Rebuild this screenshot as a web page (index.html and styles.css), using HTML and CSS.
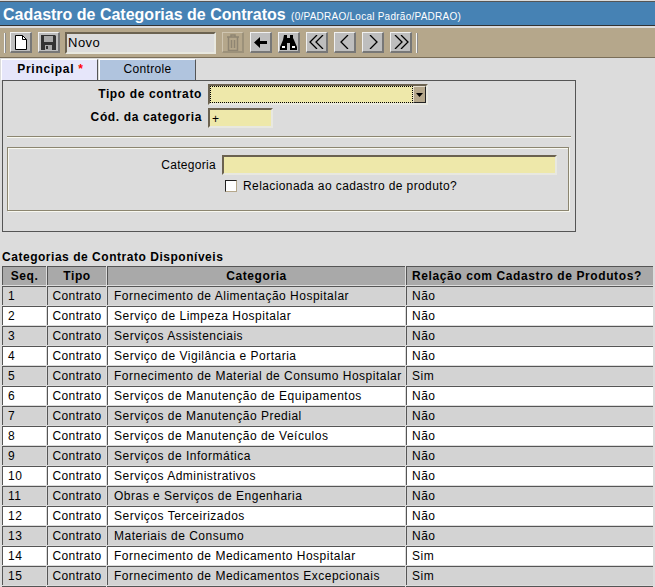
FILE: index.html
```html
<!DOCTYPE html>
<html>
<head>
  <title>Cadastro de Categorias de Contratos</title>
  <link rel="stylesheet" href="styles.css">
</head>
<body>
  <div class="titlebar">
    <span class="title">Cadastro de Categorias de Contratos</span>
    <span class="subtitle">(0/PADRAO/Local Padrão/PADRAO)</span>
  </div>

  <div class="toolbar">
    <span class="sep first"></span>
    <button class="tool">
      <svg width="12" height="15" viewBox="0 0 12 15"><path d="M.5.5h7l4 4v10H.5z" fill="#fff" stroke="#000"/><path d="M7.500.5v4h4" fill="none" stroke="#000"/></svg>
    </button>
    <button class="tool">
      <svg width="15" height="15" viewBox="0 0 15 15"><path d="M0 0h14l1 1v14H0z" fill="#333"/><path d="M3 1h9v6H3z" fill="#aaa"/><path d="M4 10h7v5H4z" fill="#aaa"/><path d="M5 11h2v3H5z" fill="#333"/></svg>
    </button>
    <div class="status">Novo</div>
    <button class="tool disabled">
      <svg width="14" height="17" viewBox="0 0 14 17"><path d="M1 3h12M5 3V1h4v2M2.500 3.500v13h9v-13M5.500 6v8M8.500 6v8" fill="none" stroke="#8f8572" stroke-width="1.500"/></svg>
    </button>
    <button class="tool">
      <svg width="13" height="11" viewBox="0 0 13 11"><path d="M6 0v4h7v3H6v4L0 5.500z" fill="#000"/></svg>
    </button>
    <button class="tool">
      <svg width="17" height="15" viewBox="0 0 17 15"><path d="M4 0h3v3h3V0h3v3l1 2 3 7v3h-7V8H7v7H0v-3l3-7z" fill="#000"/><path d="M2 11h3v2H2zM12 11h3v2h-3z" fill="#fff"/></svg>
    </button>
    <button class="tool">
      <svg width="16" height="14" viewBox="0 0 16 14"><path d="M8 0 1 7l7 7M14 0 7 7l7 7" fill="none" stroke="#000" stroke-width="1.300"/></svg>
    </button>
    <button class="tool">
      <svg width="10" height="14" viewBox="0 0 10 14"><path d="M8 0 1 7l7 7" fill="none" stroke="#000" stroke-width="1.300"/></svg>
    </button>
    <button class="tool">
      <svg width="10" height="14" viewBox="0 0 10 14"><path d="m2 0 7 7-7 7" fill="none" stroke="#000" stroke-width="1.300"/></svg>
    </button>
    <button class="tool">
      <svg width="16" height="14" viewBox="0 0 16 14"><path d="m2 0 7 7-7 7M8 0l7 7-7 7" fill="none" stroke="#000" stroke-width="1.300"/></svg>
    </button>
    <span class="sep last"></span>
  </div>

  <div class="tabs">
    <div class="tab active">Principal <span class="req">*</span></div>
    <div class="tab">Controle</div>
  </div>

  <div class="panel">
    <div class="row first">
      <label class="label strong">Tipo de contrato</label>
      <div class="select"><span class="select-value"></span><span class="select-btn"><svg width="7" height="4" viewBox="0 0 7 4"><path d="M0 0h7L3.500 4z" fill="#000"/></svg></span></div>
    </div>
    <div class="row">
      <label class="label strong">Cód. da categoria</label>
      <div class="field code">+</div>
    </div>
    <div class="divider"></div>
    <div class="group">
      <div class="group-row">
        <label class="label small">Categoria</label>
        <div class="field wide"></div>
      </div>
      <div class="check-row">
        <span class="check"></span>
        <span>Relacionada ao cadastro de produto?</span>
      </div>
    </div>
  </div>

  <h4 class="list-title">Categorias de Contrato Disponíveis</h4>
  <table class="grid">
    <colgroup>
      <col class="c-seq"><col class="c-tipo"><col class="c-cat"><col class="c-rel">
    </colgroup>
    <thead>
      <tr><th>Seq.</th><th>Tipo</th><th>Categoria</th><th>Relação com Cadastro de Produtos?</th></tr>
    </thead>
    <tbody>
      <tr><td>1</td><td>Contrato</td><td>Fornecimento de Alimentação Hospitalar</td><td>Não</td></tr>
      <tr><td>2</td><td>Contrato</td><td>Serviço de Limpeza Hospitalar</td><td>Não</td></tr>
      <tr><td>3</td><td>Contrato</td><td>Serviços Assistenciais</td><td>Não</td></tr>
      <tr><td>4</td><td>Contrato</td><td>Serviço de Vigilância e Portaria</td><td>Não</td></tr>
      <tr><td>5</td><td>Contrato</td><td>Fornecimento de Material de Consumo Hospitalar</td><td>Sim</td></tr>
      <tr><td>6</td><td>Contrato</td><td>Serviços de Manutenção de Equipamentos</td><td>Não</td></tr>
      <tr><td>7</td><td>Contrato</td><td>Serviços de Manutenção Predial</td><td>Não</td></tr>
      <tr><td>8</td><td>Contrato</td><td>Serviços de Manutenção de Veículos</td><td>Não</td></tr>
      <tr><td>9</td><td>Contrato</td><td>Serviços de Informática</td><td>Não</td></tr>
      <tr><td>10</td><td>Contrato</td><td>Serviços Administrativos</td><td>Não</td></tr>
      <tr><td>11</td><td>Contrato</td><td>Obras e Serviços de Engenharia</td><td>Não</td></tr>
      <tr><td>12</td><td>Contrato</td><td>Serviços Terceirizados</td><td>Não</td></tr>
      <tr><td>13</td><td>Contrato</td><td>Materiais de Consumo</td><td>Não</td></tr>
      <tr><td>14</td><td>Contrato</td><td>Fornecimento de Medicamento Hospitalar</td><td>Sim</td></tr>
      <tr><td>15</td><td>Contrato</td><td>Fornecimento de Medicamentos Excepcionais</td><td>Sim</td></tr>
      <tr><td></td><td></td><td></td><td></td></tr>
    </tbody>
  </table>
</body>
</html>
```

FILE: styles.css
```css
html, body {
  height: 587px;
  overflow: hidden;
}
body {
  margin: 0;
  background: #dcdcdc;
  font-family: "Liberation Sans", Arial, sans-serif;
  font-size: 12px;
  letter-spacing: 0.4px;
  color: #000;
}

.titlebar {
  height: 23px;
  margin-top: 1px;
  border-top: 1px solid #555;
  border-bottom: 1px solid #333;
  background: #4682b4;
  color: #fff;
  padding-left: 3px;
  line-height: 25px;
  white-space: nowrap;
  letter-spacing: 0;
}
.title {
  font-size: 16px;
  font-weight: bold;
}
.subtitle {
  font-size: 10px;
  letter-spacing: 0.25px;
  margin-left: 2px;
}

.toolbar {
  display: flex;
  align-items: center;
  gap: 6px;
  height: 29px;
  margin-top: 1px;
  padding-left: 4px;
  background: #b5a78b;
  border-top: 1px solid #dcdcdc;
  border-bottom: 1px solid #7a6e58;
}
.sep {
  width: 2px;
  height: 20px;
  background: #f4f4f4;
  border-right: 1px solid #8c8c8c;
  box-sizing: border-box;
}
.sep.first {
  margin-right: -2px;
}
.sep.last {
  margin-left: -2px;
}
.tool {
  display: flex;
  align-items: center;
  justify-content: center;
  width: 22px;
  height: 21px;
  padding: 0;
  box-sizing: border-box;
  background: #bebebe;
  border: 1px solid;
  border-color: #f0f0f0 #777 #777 #f0f0f0;
  border-width: 1px 2px 2px 1px;
}
.tool.disabled {
  background: #b5a78b;
  border-color: #cfc5b0 #9c917a #9c917a #cfc5b0;
}
.status {
  width: 151px;
  height: 22px;
  box-sizing: border-box;
  background: #dcdcdc;
  border: 2px solid;
  border-color: #6b6250 #e8e8e0 #e8e8e0 #6b6250;
  padding-left: 1px;
  font-size: 13px;
  letter-spacing: 0.5px;
  line-height: 18px;
  margin-left: -1px;
}

.tabs {
  display: flex;
  height: 21px;
  margin: 1px 0 0 1px;
}
.tab {
  width: 97px;
  box-sizing: border-box;
  text-align: center;
  line-height: 19px;
  letter-spacing: 0.3px;
  background: #b0c4de;
  border-top: 1px solid #fff;
  border-left: 1px solid #fff;
  border-right: 1px solid #555;
  margin-right: 1px;
}
.tab.active {
  background: #e6e6fa;
  font-weight: bold;
  letter-spacing: 0.7px;
  padding-left: 2px;
}
.req {
  color: #f00;
}

.panel {
  width: 574px;
  height: 152px;
  margin-left: 2px;
  box-sizing: border-box;
  border: 1px solid #555;
}
.row {
  display: flex;
  align-items: center;
  gap: 6px;
  margin-bottom: 3px;
}
.row.first {
  margin-top: 3px;
}
.row .label {
  width: 199px;
  margin-bottom: 2px;
}
.label {
  text-align: right;
  white-space: nowrap;
}
.strong {
  font-weight: bold;
  letter-spacing: 0.63px;
}
.select {
  display: flex;
  width: 220px;
  height: 21px;
  box-sizing: border-box;
  border: 2px solid;
  border-color: #6b6250 #e8e8e0 #e8e8e0 #6b6250;
}
.select-value {
  flex: 1;
  background: #eee8aa;
  outline: 1px dotted #000;
  outline-offset: -1px;
}
.select-btn {
  display: flex;
  align-items: center;
  justify-content: center;
  width: 13px;
  background: #b5a78b;
  border: 1px solid;
  border-color: #e8e0d0 #222 #222 #e8e0d0;
  box-sizing: border-box;
}
.field {
  box-sizing: border-box;
  background: #eee8aa;
  border: 2px solid;
  border-color: #6b6250 #e8e8e0 #e8e8e0 #6b6250;
}
.code {
  width: 65px;
  height: 20px;
  line-height: 18px;
  padding-left: 2px;
}
.divider {
  margin: 8px 4px 9px 4px;
  height: 2px;
  background: #f8f8f0;
  border-top: 1px solid #8c8670;
  box-sizing: border-box;
}
.group {
  width: 562px;
  height: 64px;
  margin-left: 4px;
  box-sizing: border-box;
  border: 1px solid #8c8670;
  box-shadow: inset 1px 1px 0 #f8f8f0, 1px 1px 0 #f8f8f0;
  padding-top: 7px;
}
.group-row {
  display: flex;
  align-items: center;
  gap: 6px;
  letter-spacing: 0.3px;
}
.small {
  width: 208px;
  margin-bottom: 1px;
}
.wide {
  width: 335px;
  height: 20px;
}
.check-row {
  display: flex;
  align-items: center;
  gap: 6px;
  margin: 4px 0 0 217px;
}
.check {
  width: 12px;
  height: 12px;
  box-sizing: border-box;
  background: #fff;
  border: 1px solid;
  border-color: #222 #b5a78b #b5a78b #222;
}

.list-title {
  margin: 18px 0 1px 2px;
  font-size: 12px;
  line-height: 14px;
  font-weight: bold;
  letter-spacing: 0.53px;
}
.grid {
  width: 653px;
  margin-left: 1px;
  table-layout: fixed;
  border-collapse: separate;
  border-spacing: 1px;
  background: #dcdcdc;
  letter-spacing: 0.5px;
}
.c-seq { width: 44px; }
.c-tipo { width: 59px; }
.c-cat { width: 298px; }
.grid th, .grid td {
  height: 18px;
  padding: 0 0 0 5px;
  border: 1px solid #555;
  border-width: 1px 0 0 1px;
  white-space: nowrap;
  overflow: hidden;
}
.grid th {
  background: #a9a9a9;
  font-weight: bold;
  letter-spacing: 0.6px;
  text-align: center;
  padding: 0;
}
.grid th:last-child {
  text-align: left;
  padding-left: 5px;
}
.grid td:nth-child(2) {
  text-align: center;
  padding: 0;
  letter-spacing: 0.35px;
}
.grid td:nth-child(3) {
  padding-left: 6px;
}
.grid tbody tr:nth-child(odd) td {
  background: #d3d3d3;
}
.grid tbody tr:nth-child(even) td {
  background: #fff;
}
```
